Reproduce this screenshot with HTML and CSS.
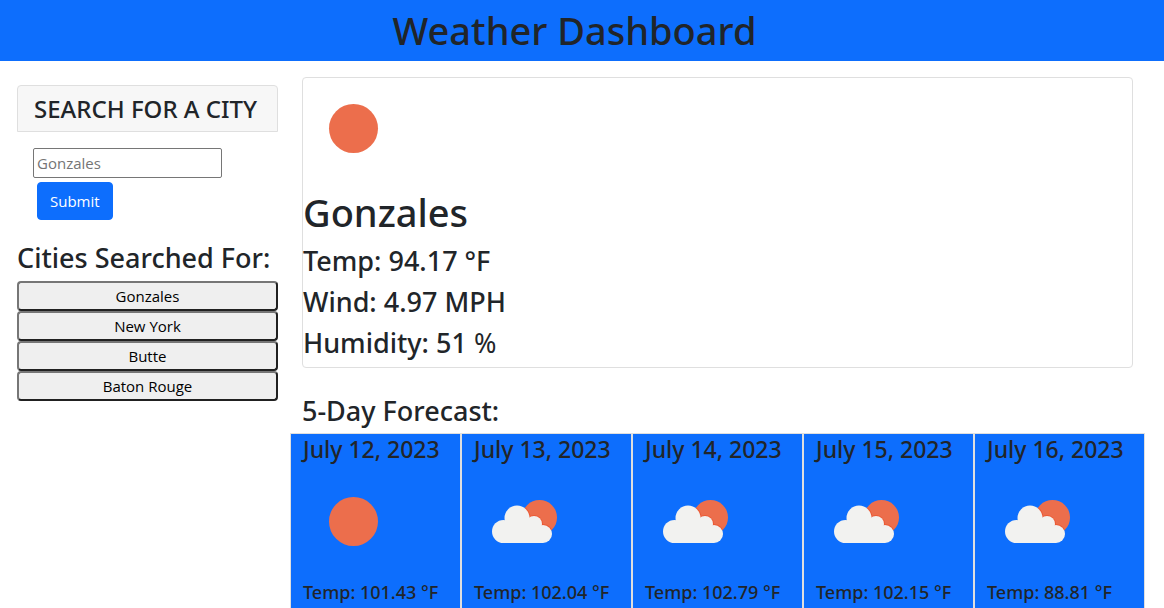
FILE: index.html
```html
<!DOCTYPE html>
<html lang="en">
<head>
<meta charset="utf-8">
<meta name="viewport" content="width=device-width, initial-scale=1">
<title>Weather Dashboard</title>
<link rel="stylesheet" href="styles.css">
</head>
<body>
<svg class="sprite" aria-hidden="true">
  <symbol id="sun" viewBox="0 0 100 100"><circle cx="50.5" cy="50.5" r="24.5" fill="#ec6e4c"/></symbol>
  <symbol id="cloudy" viewBox="0 0 100 100">
    <clipPath id="disc"><circle cx="65.5" cy="46.5" r="17.5"/></clipPath>
    <circle cx="65.5" cy="46.5" r="17.5" fill="#ec6e4c"/>
    <g clip-path="url(#disc)" fill="#eb5a35"><circle cx="43" cy="47" r="13.500"/><circle cx="60" cy="53" r="9"/><circle cx="69" cy="63" r="10"/></g>
    <g fill="#f2f2f0"><circle cx="43" cy="47" r="12.5"/><circle cx="60" cy="53" r="8"/><circle cx="69" cy="63" r="9"/><circle cx="29.5" cy="60.5" r="11.5"/><path d="M29.500 50H60L69 58V72H29.500Z"/></g>
  </symbol>
</svg>
<header class="banner"><h1>Weather Dashboard</h1></header>
<div class="layout">
  <aside class="sidebar">
    <h2 class="search-title"><label for="city">SEARCH FOR A CITY</label></h2>
    <form class="search">
      <input id="city" class="search-input" type="text" placeholder="Gonzales">
      <button class="submit" type="submit">Submit</button>
    </form>
    <h2 class="history-title">Cities Searched For:</h2>
    <div class="history">
      <button type="button">Gonzales</button>
      <button type="button">New York</button>
      <button type="button">Butte</button>
      <button type="button">Baton Rouge</button>
    </div>
  </aside>
  <main class="content">
    <section class="current">
      <svg class="icon" role="img" aria-label="Clear"><use href="#sun"/></svg>
      <h2 class="city-name">Gonzales</h2>
      <h3>Temp: 94.17 °F</h3>
      <h3>Wind: 4.97 MPH</h3>
      <h3>Humidity: 51 <span class="thin">%</span></h3>
    </section>
    <h2 class="forecast-title">5-Day Forecast:</h2>
    <section class="forecast">
      <article class="day"><h3>July 12, 2023</h3><svg class="icon" role="img" aria-label="Clear"><use href="#sun"/></svg><p>Temp: 101.43 °F</p></article>
      <article class="day"><h3>July 13, 2023</h3><svg class="icon" role="img" aria-label="Few clouds"><use href="#cloudy"/></svg><p>Temp: 102.04 °F</p></article>
      <article class="day"><h3>July 14, 2023</h3><svg class="icon" role="img" aria-label="Few clouds"><use href="#cloudy"/></svg><p>Temp: 102.79 °F</p></article>
      <article class="day"><h3>July 15, 2023</h3><svg class="icon" role="img" aria-label="Few clouds"><use href="#cloudy"/></svg><p>Temp: 102.15 °F</p></article>
      <article class="day"><h3>July 16, 2023</h3><svg class="icon" role="img" aria-label="Few clouds"><use href="#cloudy"/></svg><p>Temp: 88.81 °F</p></article>
    </section>
  </main>
</div>
</body>
</html>
```
FILE: styles.css
```css
* { box-sizing: border-box; }
body {
  display: flex;
  flex-direction: column;
  min-height: 100vh;
  margin: 0;
  background: #fff;
  color: #212529;
  font: 400 15px/24px "Open Sans", "Noto Sans", sans-serif;
}
h1, h2, h3, p { margin: 0; font-family: "Noto Sans", sans-serif; font-weight: 500; }
.sprite { position: absolute; width: 0; height: 0; }
.banner { padding: 6px 15px 7px 0; background: #0d6efd; text-align: center; }
.banner h1 { font-size: 38px; line-height: 48px; }
.layout { display: grid; grid-template-columns: 1fr 3fr; flex: 1; padding-right: 19px; gap: 5px; }
.sidebar { padding: 24px 7px 0 17px; }
.search-title {
  padding: 8px 16px;
  border: 1px solid #dfdfdf;
  border-radius: 4px 4px 0 0;
  background: #f7f7f7;
  font-size: 24px;
  line-height: 29px;
  white-space: nowrap;
}
.search { display: flex; flex-direction: column; align-items: flex-start; gap: 4px; padding: 16px; }
.search-input {
  width: 189px;
  height: 30px;
  padding: 1px 3px;
  border: 1px solid #767676;
  border-radius: 2px;
  font: inherit;
}
.search-input::placeholder { color: #757575; }
.submit {
  height: 38px;
  margin-left: 4px;
  padding: 6px 12px;
  border: 1px solid #0d6efd;
  border-radius: 4px;
  background: #0d6efd;
  color: #fff;
  font: inherit;
}
.history-title { margin: 5px 0 6px; font-size: 27px; line-height: 34px; white-space: nowrap; }
.history { display: flex; flex-direction: column; }
.history button {
  height: 30px;
  padding: 1px 6px;
  border: 2px solid;
  border-color: #767676 #212121 #212121 #767676;
  border-radius: 4px;
  background: #efefef;
  color: #000;
  font: inherit;
}
.content { display: flex; flex-direction: column; min-width: 0; padding-top: 16px; }
.current { margin: 0 12px; padding-bottom: 8px; border: 1px solid #dfdfdf; border-radius: 4px; }
.icon { display: block; width: 100px; height: 100px; }
.city-name { margin: 10px 0 8px; font-size: 38px; line-height: 48px; }
.current h3 { font-size: 27px; line-height: 33px; }
.current h3 + h3 { margin-top: 8px; }
.thin { font-weight: 400; }
.forecast-title { margin: 26px 12px 5px; font-size: 27px; line-height: 34px; }
.forecast { display: grid; grid-template-columns: repeat(5, 1fr); flex: 1; }
.day { padding: 1px 12px 0; border: 1px solid #dfdfdf; border-bottom: 0; background: #0d6efd; white-space: nowrap; }
.day h3 { margin-bottom: 7px; font-size: 23px; line-height: 29px; }
.day p { margin-top: 9px; font-size: 18px; line-height: 24px; }
```
